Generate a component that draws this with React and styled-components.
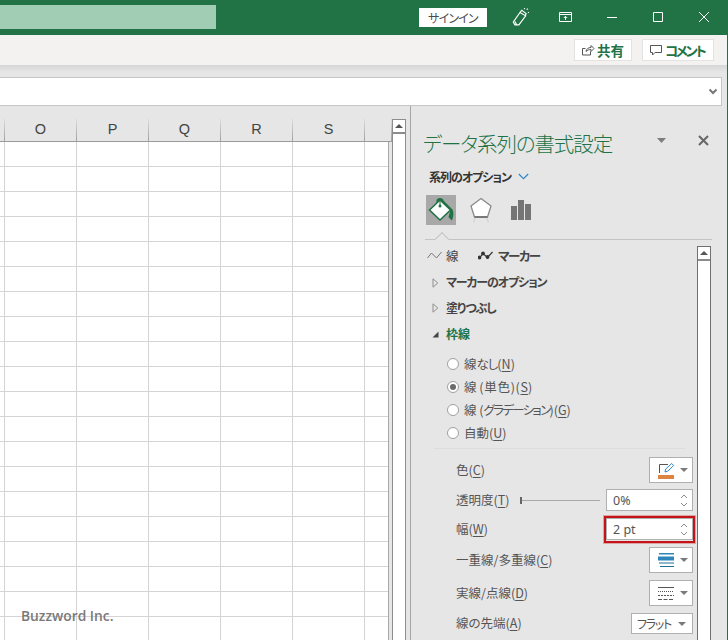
import React from 'react';
import styled, { createGlobalStyle } from 'styled-components';

const GlobalStyle = createGlobalStyle`
  html, body { margin: 0; padding: 0; background: #e6e6e6; }
  body {
    font-family: "Noto Sans CJK JP", "Noto Sans", sans-serif;
    font-feature-settings: "palt";
    color: #444;
  }
`;

const Page = styled.div`
  position: relative;
  width: 728px;
  height: 640px;
  overflow: hidden;
  display: flex;
  flex-direction: column;
  box-sizing: border-box;
  border-right: 1px solid #217346;
`;

/* title bar */
const TitleBar = styled.div`
  height: 35px;
  flex: none;
  margin-right: -1px;
  background: #217346;
  display: flex;
  align-items: center;
  padding-bottom: 1px;
  box-sizing: border-box;
`;

const SearchBox = styled.div`
  width: 216px;
  height: 24px;
  background: #a0cdb4;
`;

const SignIn = styled.div`
  margin-left: 203px;
  width: 68px;
  height: 19px;
  background: #fff;
  color: #4c4c4c;
  font-size: 12px;
  letter-spacing: -0.8px;
  display: flex;
  align-items: center;
  justify-content: center;
`;

const TitleIcon = styled.svg`
  flex: none;
  width: ${p => p.$size}px;
  height: ${p => p.$size}px;
  margin-left: ${p => p.$gap}px;
  stroke: #fff;
  fill: none;
`;

/* share strip */
const ShareBar = styled.div`
  height: 30px;
  flex: none;
  background: #f3f2f1;
  display: flex;
  align-items: center;
  justify-content: flex-end;
  gap: 10px;
  padding-right: 13px;
`;

const ShareButton = styled.div`
  height: 22px;
  width: ${p => p.$w}px;
  box-sizing: border-box;
  background: #fff;
  border: 1px solid #e4e3e1;
  color: #217346;
  font-size: 13.5px;
  font-weight: 700;
  letter-spacing: ${p => p.$ls || 0}px;
  padding-left: 6px;
  display: flex;
  align-items: center;
  gap: ${p => p.$gap}px;
`;

const Shade = styled.div`
  height: 12px;
  flex: none;
  background: linear-gradient(#d6d6d6, #e6e6e6 60%);
`;

const FormulaBar = styled.div`
  height: 29px;
  flex: none;
  width: 722px;
  box-sizing: border-box;
  background: #fff;
  border: 1px solid #c6c6c6;
  border-left: none;
  display: flex;
  align-items: center;
  justify-content: flex-end;
  padding-right: 3px;
`;

const Main = styled.div`
  flex: 1;
  min-height: 0;
  display: flex;
`;

/* sheet */
const Sheet = styled.div`
  width: 388px;
  flex: none;
  padding-top: 11px;
`;

const HeaderRow = styled.div`
  height: 24px;
  width: 392px;
  display: grid;
  grid-template-columns: 5px repeat(5, 72px) 27px;
  border-bottom: 1px solid #9b9b9b;
`;

const HeaderCell = styled.div`
  box-sizing: border-box;
  font-family: "Liberation Sans", sans-serif;
  font-size: 14.5px;
  color: #444;
  display: flex;
  align-items: center;
  justify-content: center;
  border-right: 1px solid transparent;
  border-image: linear-gradient(#e6e6e6, #9d9d9d) 1;
  border-image-width: 0 1px 0 0;
`;

const Grid = styled.div`
  display: grid;
  grid-template-columns: 5px repeat(5, 72px) 23px;
  grid-auto-rows: 25px;
  background: #fff;
  border-right: 1px solid #a9a9a9;
  box-sizing: border-box;
  width: 389px;
`;

const Cell = styled.div`
  box-sizing: border-box;
  border-right: 1px solid #d4d4d4;
  border-bottom: 1px solid #d4d4d4;
  &:nth-child(7n) { border-right: none; }
`;

const SheetScroll = styled.div`
  width: 14px;
  flex: none;
  margin: 13px 0 0 4px;
  box-sizing: border-box;
  background: #fff;
  border: 1px solid #8c8c8c;
  border-bottom: none;
`;

const ScrollCap = styled.div`
  height: 14px;
  box-sizing: border-box;
  background: #fff;
  border-bottom: 2px solid #8c8c8c;
  display: flex;
  align-items: center;
  justify-content: center;
  &::before {
    content: '';
    border-left: 4px solid transparent;
    border-right: 4px solid transparent;
    border-bottom: 4px solid #555;
  }
`;

/* format pane */
const Pane = styled.div`
  margin-left: 4px;
  flex: 1;
  min-width: 0;
  background: #e6e6e6;
  border-left: 1px solid #a6a6a6;
  display: flex;
  flex-direction: column;
`;

const PaneTitleRow = styled.div`
  height: 28px;
  flex: none;
  margin-top: 24px;
  padding-left: 12px;
  display: flex;
  align-items: center;
`;

const PaneTitle = styled.div`
  width: 234px;
  padding-bottom: 2px;
  font-size: 20.5px;
  letter-spacing: -1.1px;
  font-weight: 300;
  line-height: 26px;
  color: #217346;
  white-space: nowrap;
`;

const PaneGlyph = styled.svg`
  flex: none;
  margin: 0 0 8px ${p => p.$gap || 0}px;
`;

const PaneOption = styled.div`
  height: 18px;
  flex: none;
  margin-top: 9px;
  padding-left: 18px;
  display: flex;
  align-items: center;
  gap: 7px;
  font-size: 12px;
  letter-spacing: -1px;
  font-weight: 700;
  color: #333;
`;

const IconTabs = styled.div`
  height: 30px;
  flex: none;
  margin: 10px 0 0 15px;
  display: flex;
  gap: 10px;
`;

const IconTab = styled.div`
  width: 30px;
  height: 30px;
  background: ${p => (p.$active ? '#a8a8a8' : 'transparent')};
  display: flex;
  align-items: center;
  justify-content: center;
`;

const TabRule = styled.div`
  position: relative;
  flex: none;
  height: 1px;
  margin: 14px 15px 0 14px;
  background: #c4c4c4;
  &::after {
    content: '';
    position: absolute;
    left: 12px;
    top: -5px;
    width: 9px;
    height: 9px;
    background: #e6e6e6;
    border-left: 1px solid #c4c4c4;
    border-top: 1px solid #c4c4c4;
    transform: rotate(45deg);
  }
`;

const PaneBody = styled.div`
  flex: 1;
  min-height: 0;
  margin-top: 6px;
  display: flex;
`;

const PaneContent = styled.div`
  width: 286px;
  flex: none;
  overflow: hidden;
`;

const PaneScroll = styled.div`
  width: 14px;
  flex: none;
  box-sizing: border-box;
  background: #fff;
  border: 1px solid #707070;
  border-bottom: none;
`;

const SubTabs = styled.div`
  height: 18px;
  padding-left: 16px;
  display: flex;
  align-items: center;
  font-size: 12.5px;
  color: #444;
`;

const SubTab = styled.div`
  display: flex;
  align-items: center;
  gap: 4px;
  width: ${p => p.$w}px;
  font-weight: ${p => (p.$bold ? 700 : 400)};
  letter-spacing: ${p => (p.$bold ? -1.4 : 0)}px;
`;

const Section = styled.div`
  height: ${p => p.$h}px;
  margin-top: ${p => p.$mt || 0}px;
  padding-left: 21px;
  display: flex;
  align-items: center;
  gap: 7px;
  font-size: 12px;
  font-weight: 700;
  letter-spacing: ${p => p.$ls || 0}px;
  color: ${p => (p.$open ? '#217346' : '#444')};
  & > span:last-child { padding-bottom: 2px; }
`;

const Caret = styled.span`
  width: 7px;
  height: 10px;
  flex: none;
  display: flex;
  align-items: center;
`;

const RadioList = styled.div`
  margin: 5px 0 0 36px;
  display: flex;
  flex-direction: column;
`;

const RadioRow = styled.div`
  height: 23px;
  display: flex;
  align-items: center;
  gap: 5px;
  font-size: 12.5px;
  color: #555;
`;

const RadioDot = styled.span`
  width: 12px;
  height: 12px;
  flex: none;
  box-sizing: border-box;
  border-radius: 50%;
  border: 1px solid #9f9f9f;
  background: #fff;
  display: flex;
  align-items: center;
  justify-content: center;
  &::after {
    content: '';
    width: 6px;
    height: 6px;
    border-radius: 50%;
    background: ${p => (p.$on ? '#6a6a6a' : 'transparent')};
  }
`;

const Kana = styled.span`
  letter-spacing: ${p => p.$ls}px;
`;

const Key = styled.span`
  text-decoration: underline;
  text-underline-offset: 2px;
  text-decoration-thickness: 1px;
`;

const FormRule = styled.div`
  height: 1px;
  margin: 4px 12px 0 23px;
  background: #dcdcdc;
`;

const FormList = styled.div`
  margin: 8px 4px 0 45px;
  display: flex;
  flex-direction: column;
`;

const FormRow = styled.div`
  height: ${p => p.$h}px;
  margin-top: ${p => p.$mt}px;
  display: flex;
  align-items: center;
  justify-content: space-between;
  font-size: 12.5px;
  color: #555;
  white-space: nowrap;
`;

const FormLabel = styled.span`
  padding-bottom: 2px;
`;

const Highlighted = styled.div`
  position: absolute;
  left: 604px;
  top: 516px;
  width: 91px;
  height: 27px;
  box-sizing: border-box;
  border: 2px solid #c4141a;
  box-shadow: 0 0 0 1px rgba(200, 40, 40, 0.35);
  pointer-events: none;
`;

const PickButton = styled.div`
  width: 44px;
  height: 26px;
  box-sizing: border-box;
  background: #fff;
  border: 1px solid #b0b0b0;
  display: flex;
  align-items: center;
  padding-left: 8px;
  gap: 5px;
`;

const DownCaret = styled.span`
  border-left: 4px solid transparent;
  border-right: 4px solid transparent;
  border-top: 4px solid #7a7a7a;
`;

const SliderGroup = styled.div`
  display: flex;
  align-items: center;
  gap: 11px;
`;

const Slider = styled.div`
  position: relative;
  width: 80px;
  height: 1px;
  background: #a8a8a8;
  &::before {
    content: '';
    position: absolute;
    left: 0;
    top: -3px;
    width: 2px;
    height: 7px;
    background: #666;
  }
`;

const Spinner = styled.div`
  width: 87px;
  height: 22px;
  box-sizing: border-box;
  background: #fff;
  border: 1px solid #b0b0b0;
  display: flex;
  align-items: center;
  justify-content: space-between;
  padding: 0 4px 0 6px;
  font-family: "Noto Sans", sans-serif;
  font-size: 12.5px;
  color: #555;
`;

const SpinArrows = styled.span`
  display: flex;
  flex-direction: column;
  gap: 3px;
`;

const Dropdown = styled.div`
  width: 62px;
  height: 21px;
  box-sizing: border-box;
  background: #fff;
  border: 1px solid #b0b0b0;
  display: flex;
  align-items: center;
  justify-content: space-between;
  padding: 0 6px 0 5px;
  font-size: 12px;
  letter-spacing: -1.3px;
  color: #555;
`;

const Watermark = styled.div`
  position: absolute;
  left: 21px;
  top: 607px;
  font-family: "Open Sans", sans-serif;
  font-size: 13.8px;
  font-weight: 600;
  line-height: 18px;
  color: #7a7a7a;
`;

const Spin = ({ up }) => (
  <svg width="8" height="5" viewBox="0 0 8 5" fill="none" stroke="#8a8a8a">
    <path d={up ? 'M1 4l3-3 3 3' : 'M1 1l3 3 3-3'} />
  </svg>
);

const Collapsed = () => (
  <Caret>
    <svg width="7" height="10" viewBox="0 0 7 10" fill="none" stroke="#8e8e8e">
      <path d="M1 .8l4.800 4.200L1 9.200z" />
    </svg>
  </Caret>
);

const Expanded = () => (
  <Caret>
    <svg width="7" height="7" viewBox="0 0 7 7">
      <path d="M6.500 .5v6h-6z" fill="#444" />
    </svg>
  </Caret>
);

const columns = ['', 'O', 'P', 'Q', 'R', 'S', ''];

export default function App() {
  const cells = Array.from({ length: 7 * 20 });
  return (
    <Page>
      <GlobalStyle />
      <TitleBar>
        <SearchBox />
        <SignIn>サインイン</SignIn>
        <TitleIcon $gap={24} $size={18} viewBox="0 0 16 16">
          <path d="M2 12.500L8 4l5 3-6 8H3.500z M8 4l1.500-2 4 3-1 2 M5 15l-1.500-3" strokeWidth="1" />
          <path d="M14 1.500l1-1 M15 4h1 M12 0v1" strokeWidth="1" />
        </TitleIcon>
        <TitleIcon $gap={28} $size={16} viewBox="0 0 16 16">
          <path d="M2.500 3.500h12v9h-12z M2.500 5.500h12" strokeWidth="1" />
          <path d="M8.500 11V7.500 M6.800 9l1.700-1.700L10.200 9" strokeWidth="1" />
        </TitleIcon>
        <TitleIcon $gap={33} $size={12} viewBox="0 0 12 12">
          <path d="M1 6.500h10" strokeWidth="1" />
        </TitleIcon>
        <TitleIcon $gap={34} $size={12} viewBox="0 0 12 12">
          <path d="M1.500 1.500h9v9h-9z" strokeWidth="1" />
        </TitleIcon>
        <TitleIcon $gap={34} $size={12} viewBox="0 0 12 12">
          <path d="M1 1l10 10M11 1L1 11" strokeWidth="1" />
        </TitleIcon>
      </TitleBar>

      <ShareBar>
        <ShareButton $w={58} $gap={2}>
          <svg width="14" height="14" viewBox="0 0 14 14" fill="none" stroke="#555">
            <path d="M9.500 8.500v3.500h-8V5.500h3 M5 8.500c.5-3 2.500-4 5-4V2.500l3 3-3 3V6.500c-2 0-3.500.5-5 2z" />
          </svg>
          共有
        </ShareButton>
        <ShareButton $w={72} $gap={2} $ls={-2.4}>
          <svg width="14" height="14" viewBox="0 0 14 14" fill="none" stroke="#555">
            <path d="M1.500 2.500h11v7h-6.500l-2.500 2.500v-2.500h-2z" />
          </svg>
          コメント
        </ShareButton>
      </ShareBar>
      <Shade />

      <FormulaBar>
        <svg width="10" height="7" viewBox="0 0 10 7" fill="none" stroke="#777" strokeWidth="2">
          <path d="M1.500 1.500L5 5l3.500-3.500" />
        </svg>
      </FormulaBar>

      <Main>
        <Sheet>
          <HeaderRow>
            {columns.map((c, i) => (
              <HeaderCell key={i}>{c}</HeaderCell>
            ))}
          </HeaderRow>
          <Grid>
            {cells.map((_, i) => (
              <Cell key={i} />
            ))}
          </Grid>
        </Sheet>
        <SheetScroll>
          <ScrollCap />
        </SheetScroll>

        <Pane>
          <PaneTitleRow>
            <PaneTitle>データ系列の書式設定</PaneTitle>
            <PaneGlyph width="9" height="5" viewBox="0 0 9 5">
              <path d="M0 0h9L4.500 5z" fill="#7d7d7d" />
            </PaneGlyph>
            <PaneGlyph $gap={32} width="11" height="11" viewBox="0 0 11 11" fill="none" stroke="#666" strokeWidth="2">
              <path d="M1 1l9 9M10 1l-9 9" />
            </PaneGlyph>
          </PaneTitleRow>
          <PaneOption>
            系列のオプション
            <svg width="11" height="7" viewBox="0 0 11 7" fill="none" stroke="#2f87c9" strokeWidth="1.200">
              <path d="M.8 1l4.700 4.700L10.200 1" />
            </svg>
          </PaneOption>
          <IconTabs>
            <IconTab $active>
              <svg width="30" height="30" viewBox="0 0 30 30">
                <path d="M10.500 9.500V5.500c0-3.500 7-3.500 7 0l9 9c1.500 3 1 7-.5 11-1-1-2.500-2-3.500-3.500L24.500 15z" fill="#217346" />
                <path d="M3.500 15L14 5l10.500 10L14 25z" fill="#fff" stroke="#217346" strokeWidth="1.600" />
                <circle cx="14" cy="11" r="1.500" fill="#217346" />
                <path d="M14 3.500v7" stroke="#217346" />
              </svg>
            </IconTab>
            <IconTab>
              <svg width="24" height="28" viewBox="0 0 24 28" fill="#fff" stroke="#8a8a8a">
                <path d="M12 2.500l10 7.500-3.500 11h-13L2 10z" strokeWidth="1.300" />
                <path d="M5.500 21h13" stroke="#6e6e6e" strokeWidth="1.600" />
                <path d="M6 22l-1.500 4.500M18 22l1.500 4.500" stroke="#d4d4d4" strokeWidth="1.300" fill="none" />
              </svg>
            </IconTab>
            <IconTab>
              <svg width="22" height="22" viewBox="0 0 22 22" fill="#757575">
                <path d="M1 7h6v14H1z M8 1h6v20H8z M15 5h6v16h-6z" />
              </svg>
            </IconTab>
          </IconTabs>
          <TabRule />

          <PaneBody>
            <PaneContent>
              <SubTabs>
                <SubTab $w={51}>
                  <svg width="15" height="9" viewBox="0 0 15 9" fill="none" stroke="#777">
                    <path d="M.5 7L4.500 2l5 5L14.500 1" />
                  </svg>
                  線
                </SubTab>
                <SubTab $bold>
                  <svg width="16" height="10" viewBox="0 0 16 10" fill="none" stroke="#333" strokeWidth="1.200">
                    <path d="M1.500 8L5 3.500l4.500 4L14.500 2" />
                    <circle cx="1.500" cy="7.500" r="1.300" fill="#333" />
                    <circle cx="5" cy="3.500" r="1.300" fill="#333" />
                    <circle cx="9.500" cy="7" r="1.300" fill="#333" />
                  </svg>
                  マーカー
                </SubTab>
              </SubTabs>
              <Section $h={25} $mt={6} $ls={-1.1}>
                <Collapsed />
                <span>マーカーのオプション</span>
              </Section>
              <Section $h={26} $ls={-1.1}>
                <Collapsed />
                <span>塗りつぶし</span>
              </Section>
              <Section $h={26} $open>
                <Expanded />
                <span>枠線</span>
              </Section>
              <RadioList>
                <RadioRow>
                  <RadioDot />
                  <span>線<Kana $ls={-1}>なし</Kana>(<Key>N</Key>)</span>
                </RadioRow>
                <RadioRow>
                  <RadioDot $on />
                  <span>線 <Kana $ls={0.7}>(単色)(</Kana><Key>S</Key>)</span>
                </RadioRow>
                <RadioRow>
                  <RadioDot />
                  <span>線 (<Kana $ls={-1.7}>グラデーション</Kana>)(<Key>G</Key>)</span>
                </RadioRow>
                <RadioRow>
                  <RadioDot />
                  <span>自動(<Key>U</Key>)</span>
                </RadioRow>
              </RadioList>
              <FormRule />
              <FormList>
                <FormRow $h={26} $mt={0}>
                  <FormLabel>色(<Key>C</Key>)</FormLabel>
                  <PickButton>
                    <svg width="17" height="17" viewBox="0 0 17 17" fill="none">
                      <path d="M10 2.500H1.500V11" stroke="#555" />
                      <path d="M7 10l.7-3 6-5.500 2 2-6 5.700z" fill="#fff" stroke="#2f87c9" />
                      <path d="M0 13h16v4H0z" fill="#dd8540" />
                    </svg>
                    <DownCaret />
                  </PickButton>
                </FormRow>
                <FormRow $h={22} $mt={6}>
                  <SliderGroup>
                    <FormLabel>透明度(<Key>T</Key>)</FormLabel>
                    <Slider />
                  </SliderGroup>
                  <Spinner>
                    0%
                    <SpinArrows><Spin up /><Spin /></SpinArrows>
                  </Spinner>
                </FormRow>
                <FormRow $h={22} $mt={7}>
                  <FormLabel>幅(<Key>W</Key>)</FormLabel>
                  <Spinner>
                    2 pt
                    <SpinArrows><Spin up /><Spin /></SpinArrows>
                  </Spinner>
                </FormRow>
                <FormRow $h={26} $mt={7}>
                  <FormLabel>一重線/多重線(<Key>C</Key>)</FormLabel>
                  <PickButton>
                    <svg width="17" height="15" viewBox="0 0 17 15">
                      <path d="M1 0h15v1.500H1z M0 3.500h16v4H0z" fill="#2e86b8" />
                      <path d="M1 9.500h15v1H1z M2 13h14v1H2z" fill="#1e6f9c" />
                    </svg>
                    <DownCaret />
                  </PickButton>
                </FormRow>
                <FormRow $h={26} $mt={7}>
                  <FormLabel>実線/点線(<Key>D</Key>)</FormLabel>
                  <PickButton>
                    <svg width="17" height="15" viewBox="0 0 17 15" fill="none" stroke="#555">
                      <path d="M0 1.500h16" />
                      <path d="M0 5.500h16" strokeDasharray="1 1" />
                      <path d="M0 9.500h16" strokeDasharray="2 1" />
                      <path d="M0 13.500h16" strokeDasharray="4 1.500" />
                    </svg>
                    <DownCaret />
                  </PickButton>
                </FormRow>
                <FormRow $h={21} $mt={7}>
                  <FormLabel>線の先端(<Key>A</Key>)</FormLabel>
                  <Dropdown>
                    フラット
                    <DownCaret />
                  </Dropdown>
                </FormRow>
              </FormList>
            </PaneContent>
            <PaneScroll>
              <ScrollCap />
            </PaneScroll>
          </PaneBody>
        </Pane>
      </Main>

      <Highlighted />
      <Watermark>Buzzword Inc.</Watermark>
    </Page>
  );
}
